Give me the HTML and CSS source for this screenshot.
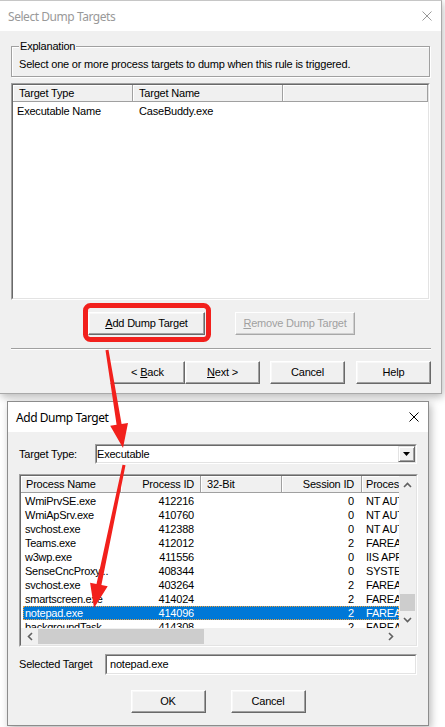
FILE: index.html
```html
<!DOCTYPE html>
<html>
<head>
<meta charset="utf-8">
<title>Select Dump Targets</title>
<link rel="stylesheet" href="styles.css">
</head>
<body>
<div class="dlg dlg1">
  <div class="titlebar">
    <span class="title">Select Dump Targets</span>
    <svg class="close" width="10" height="10" viewBox="0 0 10 10"><path d="M0.5 0.5L9.5 9.5M9.5 0.5L0.5 9.5"/></svg>
  </div>
  <div class="body1">
    <fieldset class="group">
      <legend>Explanation</legend>
      <div class="gtext">Select one or more process targets to dump when this rule is triggered.</div>
    </fieldset>
    <div class="lv lv1">
      <div class="lv-in">
        <div class="hdr">
          <div class="hc c1a">Target Type</div>
          <div class="hc c1b">Target Name</div>
          <div class="hc c1c"></div>
        </div>
        <div class="rows1">
          <div class="r1"><span class="d1a">Executable Name</span><span class="d1b">CaseBuddy.exe</span></div>
        </div>
      </div>
    </div>
    <div class="addrow">
      <div class="btn w117"><u>A</u>dd Dump Target</div>
      <div class="btn w120 disabled"><u>R</u>emove Dump Target</div>
    </div>
    <div class="sep"></div>
    <div class="nav">
      <div class="btn w75">&lt;&nbsp;<u>B</u>ack</div>
      <div class="btn w75"><u>N</u>ext&nbsp;&gt;</div>
      <div class="btn w75 ml10">Cancel</div>
      <div class="btn w75 ml11">Help</div>
    </div>
  </div>
</div>

<div class="dlg dlg2">
  <div class="titlebar">
    <span class="title">Add Dump Target</span>
    <svg class="close" width="10" height="10" viewBox="0 0 10 10"><path d="M0.5 0.5L9.5 9.5M9.5 0.5L0.5 9.5"/></svg>
  </div>
  <div class="body2">
    <div class="frow">
      <span class="lbl lbl76">Target Type:</span>
      <div class="combo">
        <div class="combo-in">
          <span class="ctext">Executable</span>
          <div class="dropbtn"><svg width="7" height="4" viewBox="0 0 7 4"><path d="M0 0H7L3.5 4Z"/></svg></div>
        </div>
      </div>
    </div>
    <div class="lv lv2">
      <div class="lv-in grid2">
        <div class="viewport">
          <div class="hdr">
            <div class="hc c2a">Process Name</div>
            <div class="hc c2b num">Process ID</div>
            <div class="hc c2c">32-Bit</div>
            <div class="hc c2d num">Session ID</div>
            <div class="hc c2e">Process User</div>
          </div>
          <div class="rows2">
            <div class="r2"><span class="d2a">WmiPrvSE.exe</span><span class="d2b">412216</span><span class="d2c"></span><span class="d2d">0</span><span class="d2e">NT AUTHORITY</span></div>
            <div class="r2"><span class="d2a">WmiApSrv.exe</span><span class="d2b">410760</span><span class="d2c"></span><span class="d2d">0</span><span class="d2e">NT AUTHORITY</span></div>
            <div class="r2"><span class="d2a">svchost.exe</span><span class="d2b">412388</span><span class="d2c"></span><span class="d2d">0</span><span class="d2e">NT AUTHORITY</span></div>
            <div class="r2"><span class="d2a">Teams.exe</span><span class="d2b">412012</span><span class="d2c"></span><span class="d2d">2</span><span class="d2e">FAREAST\user</span></div>
            <div class="r2"><span class="d2a">w3wp.exe</span><span class="d2b">411556</span><span class="d2c"></span><span class="d2d">0</span><span class="d2e">IIS APPPOOL</span></div>
            <div class="r2"><span class="d2a">SenseCncProxy...</span><span class="d2b">408344</span><span class="d2c"></span><span class="d2d">0</span><span class="d2e">SYSTEM</span></div>
            <div class="r2"><span class="d2a">svchost.exe</span><span class="d2b">403264</span><span class="d2c"></span><span class="d2d">2</span><span class="d2e">FAREAST\user</span></div>
            <div class="r2"><span class="d2a">smartscreen.exe</span><span class="d2b">414024</span><span class="d2c"></span><span class="d2d">2</span><span class="d2e">FAREAST\user</span></div>
            <div class="r2 sel"><span class="d2a">notepad.exe</span><span class="d2b">414096</span><span class="d2c"></span><span class="d2d">2</span><span class="d2e">FAREAST\user</span></div>
            <div class="r2"><span class="d2a">backgroundTask...</span><span class="d2b">414308</span><span class="d2c"></span><span class="d2d">2</span><span class="d2e">FAREAST\user</span></div>
          </div>
        </div>
        <div class="vscroll">
          <div class="sbtn"><svg width="9" height="6" viewBox="0 0 9 6"><path d="M1 5L4.5 1.5L8 5"/></svg></div>
          <div class="track"></div>
          <div class="vthumb"></div>
          <div class="sbtn"><svg width="9" height="6" viewBox="0 0 9 6"><path d="M1 1L4.5 4.5L8 1"/></svg></div>
        </div>
        <div class="hscroll">
          <div class="sbtn"><svg width="6" height="9" viewBox="0 0 6 9"><path d="M5 1L1.5 4.5L5 8"/></svg></div>
          <div class="hthumb"></div>
          <div class="track"></div>
          <div class="sbtn"><svg width="6" height="9" viewBox="0 0 6 9"><path d="M1 1L4.5 4.5L1 8"/></svg></div>
        </div>
        <div class="corner"></div>
      </div>
    </div>
    <div class="frow srow">
      <span class="lbl lbl86">Selected Target</span>
      <div class="edit"><div class="edit-in">notepad.exe</div></div>
    </div>
    <div class="okrow">
      <div class="btn w75">OK</div>
      <div class="btn w75">Cancel</div>
    </div>
  </div>
</div>

<svg class="marks" width="445" height="727" viewBox="0 0 445 727">
  <rect x="85.5" y="305.5" width="123" height="34" rx="5" ry="5" fill="none" stroke="#f2201c" stroke-width="5"/>
  <polygon fill="#f2201c" points="108.5,349.8 121.6,423.9 128,422.9 123,448 110.2,425.7 116.6,424.7 105.5,350.2"/>
  <polygon fill="#f2201c" points="125.5,465.3 101.4,585 107.7,586.3 94,608 90.1,582.7 96.5,584 122.5,464.7"/>
</svg>
</body>
</html>
```

FILE: styles.css
```css
* { box-sizing: border-box; }
html, body { margin: 0; padding: 0; }
body {
  width: 445px;
  height: 727px;
  overflow: hidden;
  position: relative;
  background: #ffffff;
  font-family: "Liberation Sans", Arial, sans-serif;
  font-size: 11px;
  letter-spacing: -0.2px;
  line-height: 13px;
  color: #000;
}

.dlg { background: #f0f0f0; display: flex; flex-direction: column; }
.dlg1 {
  width: 442px;
  height: 394px;
  border-top: 1px solid #c6c6c6;
  border-right: 1px solid #a9a9a9;
  border-bottom: 1px solid #a9a9a9;
  box-shadow: 1px 3px 8px rgba(0, 0, 0, 0.28);
}
.dlg2 {
  margin: 7px 0 0 7px;
  width: 422px;
  height: 325px;
  border: 1px solid #8c8c8c;
  box-shadow: 2px 3px 8px rgba(0, 0, 0, 0.28);
}

.titlebar {
  flex: none;
  height: 30px;
  background: #fff;
  display: flex;
  align-items: center;
  justify-content: space-between;
  padding: 0 9px 0 8px;
  font-family: "Noto Sans", "Open Sans", sans-serif;
  font-size: 12px;
  letter-spacing: -0.45px;
}
.dlg1 .titlebar { color: #999; }
.dlg2 .titlebar { color: #000; }
.close { stroke: currentColor; fill: none; stroke-width: 1; }

.body1 { flex: 1; padding: 9px 11px 0 11px; display: flex; flex-direction: column; }
.body2 { flex: 1; padding: 12px 11px 0 11px; display: flex; flex-direction: column; }

.group {
  margin: 0;
  min-width: 0;
  padding: 5px 7px 5px 7px;
  border: 1px solid #a0a0a0;
  box-shadow: inset 1px 1px #fff, 1px 1px #fff;
}
.group legend { padding: 0 1px; background: #f0f0f0; line-height: 13px; }
.gtext { white-space: nowrap; }

.lv { border: 1px solid; border-color: #a0a0a0 #fff #fff #a0a0a0; flex: none; }
.lv-in {
  height: 100%;
  border: 1px solid;
  border-color: #696969 #e3e3e3 #e3e3e3 #696969;
  background: #fff;
  overflow: hidden;
}
.lv1 { margin-top: 6px; height: 217px; }

.hdr { display: flex; height: 17px; background: #f0f0f0; white-space: nowrap; }
.hc {
  flex: none;
  height: 17px;
  line-height: 16px;
  border-right: 1px solid #a0a0a0;
  border-bottom: 1px solid #a0a0a0;
  box-shadow: inset 1px 1px #fff;
  padding-left: 6px;
  overflow: hidden;
}
.c1a { width: 120px; }
.c1b { width: 150px; }
.c1c { flex: 1; }

.rows1 { padding-top: 2px; }
.r1 { display: flex; height: 14px; line-height: 14px; white-space: nowrap; }
.d1a { width: 120px; padding-left: 4px; }
.d1b { padding-left: 6px; }

.addrow { display: flex; margin-top: 12px; padding-left: 77px; gap: 30px; }
.btn {
  flex: none;
  height: 23px;
  display: flex;
  align-items: center;
  justify-content: center;
  background: #f0f0f0;
  border: 1px solid;
  border-color: #fff #696969 #696969 #fff;
  box-shadow: inset -1px -1px #a0a0a0, inset 1px 1px #f8f8f8;
  white-space: nowrap;
}
.btn.disabled {
  color: #a0a0a0;
  border-color: #fff #a8a8a8 #a8a8a8 #fff;
  box-shadow: inset -1px -1px #cfcfcf;
}
.w75 { width: 75px; }
.w117 { width: 117px; }
.w120 { width: 120px; }
.ml10 { margin-left: 10px; }
.ml11 { margin-left: 11px; }

.sep { margin-top: 13px; margin-right: -1px; height: 2px; border-top: 1px solid #a0a0a0; border-bottom: 1px solid #fff; }
.nav { display: flex; justify-content: flex-end; margin-top: 11px; margin-right: -1px; }

.frow { display: flex; align-items: center; height: 20px; flex: none; }
.lbl { flex: none; white-space: nowrap; }
.lbl76 { width: 76px; }
.lbl86 { width: 86px; }

.combo, .edit {
  flex: 1;
  height: 100%;
  border: 1px solid;
  border-color: #a0a0a0 #fff #fff #a0a0a0;
}
.combo-in, .edit-in {
  height: 100%;
  border: 1px solid;
  border-color: #696969 #e3e3e3 #e3e3e3 #696969;
  background: #fff;
  display: flex;
  align-items: center;
}
.ctext { flex: 1; padding-left: 0; }
.dropbtn {
  width: 17px;
  height: 16px;
  background: #f0f0f0;
  border: 1px solid;
  border-color: #e3e3e3 #696969 #696969 #e3e3e3;
  box-shadow: inset 1px 1px #fff, inset -1px -1px #a0a0a0;
  display: flex;
  align-items: center;
  justify-content: center;
}
.dropbtn svg { fill: #000; }

.lv2 { margin-top: 10px; height: 173px; margin-right: -1px; }
.grid2 { display: grid; grid-template-columns: 1fr 17px; grid-template-rows: 1fr 17px; }
.viewport { overflow: hidden; min-width: 0; }
.c2a { width: 100px; padding-left: 5px; }
.c2b { width: 80px; }
.c2c { width: 81px; }
.c2d { width: 80px; }
.c2e { width: 120px; padding-left: 4px; }
.hc.num { text-align: right; padding-left: 0; }
.c2b.num { padding-right: 6px; }
.c2d.num { padding-right: 7px; }

.rows2 { padding-top: 1px; }
.r2 { display: flex; height: 14px; line-height: 14px; margin-left: 2px; white-space: nowrap; }
.r2 span { flex: none; overflow: hidden; }
.r2 span.d2a { overflow: visible; }
.d2a { width: 98px; padding-left: 2px; letter-spacing: -0.25px; }
.d2b { width: 80px; text-align: right; padding-right: 7px; }
.d2c { width: 81px; }
.d2d { width: 80px; text-align: right; padding-right: 8px; }
.d2e { width: 120px; padding-left: 4px; }
.r2.sel { background: #0078d7; color: #fff; outline: 1px dotted #f0a13a; outline-offset: -1px; }

.vscroll { display: flex; flex-direction: column; background: #f0f0f0; }
.hscroll { display: flex; background: #f0f0f0; }
.sbtn { flex: none; width: 17px; height: 17px; display: flex; align-items: center; justify-content: center; }
.sbtn svg { fill: none; stroke: #606060; stroke-width: 1.6; }
.track { flex: 1; }
.vthumb { flex: none; height: 17px; margin: 0 1px; background: #cdcdcd; }
.hthumb { flex: none; width: 166px; margin: 1px 0; background: #cdcdcd; }
.corner { background: #f0f0f0; }

.srow { margin-top: 7px; height: 21px; }
.edit-in { padding-left: 3px; }

.okrow { display: flex; justify-content: center; gap: 25px; margin-top: 15px; }

.marks { position: absolute; left: 0; top: 0; pointer-events: none; }
```
